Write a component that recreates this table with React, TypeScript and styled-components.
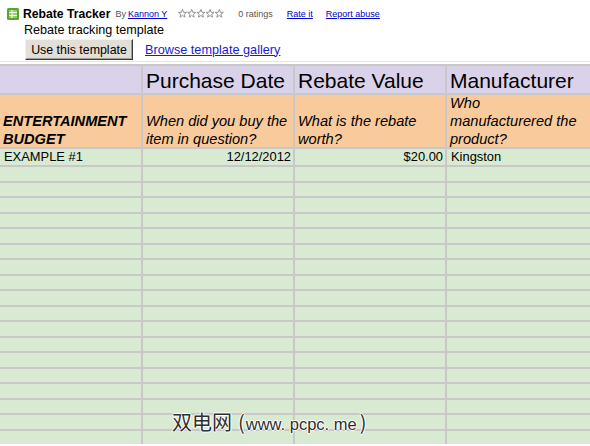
import React from "react";
import styled, { createGlobalStyle } from "styled-components";

const GlobalStyle = createGlobalStyle`
  html, body { margin: 0; padding: 0; background: #fff; overflow: hidden; }
  body { font-family: "Liberation Sans", Arial, sans-serif; color: #000; }
`;

const Page = styled.div`
  position: relative;
  width: 590px;
  height: 446px;
  overflow: hidden;
  background: #fff;
`;

const TopBar = styled.div`
  display: flex;
  flex-direction: column;
  padding: 6px 0 1px 7px;
  border-bottom: 1px solid #e6e6e6;
  margin-bottom: 1px;
`;

const TitleRow = styled.div`
  display: flex;
  align-items: center;
  height: 15px;
`;

const Title = styled.span`
  font-size: 12.2px;
  font-weight: bold;
  margin-left: 4px;
  white-space: nowrap;
`;

const Small = styled.span<{ $ml?: number }>`
  font-size: 9px;
  color: #555;
  margin-left: ${(p) => p.$ml ?? 0}px;
  white-space: nowrap;
`;

const SmallLink = styled.a<{ $ml?: number }>`
  font-size: 9px;
  color: #0000cc;
  text-decoration: underline;
  margin-left: ${(p) => p.$ml ?? 0}px;
  white-space: nowrap;
`;

const StarBox = styled.svg<{ $ml?: number }>`
  margin-left: ${(p) => p.$ml ?? 0}px;
  display: block;
`;

const Subtitle = styled.div`
  font-size: 12.6px;
  line-height: 15px;
  margin: 2px 0 0 17px;
  white-space: nowrap;
`;

const ActionRow = styled.div`
  display: flex;
  align-items: center;
  margin: 1px 0 0 18px;
  gap: 12px;
`;

const UseButton = styled.button`
  height: 21px;
  width: 108px;
  padding: 0;
  font-family: "Liberation Sans", Arial, sans-serif;
  font-size: 12.4px;
  color: #000;
  background: #e2dfd7;
  border: 1px solid;
  border-color: #f4f2ee #3c3c3c #3c3c3c #f4f2ee;
  box-shadow: inset -1px -1px 0 #a09d96;
  white-space: nowrap;
`;

const GalleryLink = styled.a`
  font-size: 12.7px;
  color: #1a1ad0;
  text-decoration: underline;
  white-space: nowrap;
`;

const Sheet = styled.div`
  display: grid;
  grid-template-columns: 141px 150px 150px 1fr;
  grid-template-rows: 27px 52px 16px repeat(18, 13.5px);
  gap: 2px;
  padding-top: 2px;
  margin-top: 2px;
  background: #c8c8c8;
`;

type Tone = "head" | "desc" | "data";
const toneBg: Record<Tone, string> = {
  head: "#d9d2e9",
  desc: "#f9cb9c",
  data: "#d9ead3",
};

const Cell = styled.div<{ $tone: Tone; $right?: boolean }>`
  background: ${(p) => toneBg[p.$tone]};
  display: flex;
  flex-direction: column;
  justify-content: flex-end;
  align-items: ${(p) => (p.$right ? "flex-end" : "flex-start")};
  padding: 0 2px 0 3px;
  overflow: hidden;
  white-space: nowrap;
`;

const HeadText = styled.span`
  font-size: 21px;
  line-height: 24px;
  padding-bottom: 0px;
`;

const DescText = styled.span<{ $bold?: boolean }>`
  font-size: 14.6px;
  line-height: 18px;
  font-style: italic;
  font-weight: ${(p) => (p.$bold ? "bold" : "normal")};
  white-space: pre-line;
  margin-bottom: -1px;
`;

const DataText = styled.span`
  font-size: 12.9px;
  line-height: 16px;
  padding-left: 1px;
`;

const Watermark = styled.div`
  position: absolute;
  left: 172px;
  top: 410px;
  display: flex;
  align-items: baseline;
  color: #2e2e2e;
  white-space: nowrap;
  text-shadow: 1px 0 0 #fff, -1px 0 0 #fff, 0 1px 0 #fff, 0 -1px 0 #fff;
`;

const MarkCjk = styled.span<{ $ml?: number }>`
  font-family: "Noto Sans CJK SC", sans-serif;
  font-size: 20px;
  line-height: 24px;
  margin-left: ${(p) => p.$ml ?? 0}px;
`;

const MarkLatin = styled.span`
  font-family: "Liberation Sans", Arial, sans-serif;
  font-size: 16.5px;
  line-height: 24px;
  margin-left: 1px;
`;

const DocIcon = () => (
  <svg width="12" height="12" viewBox="0 0 12 12" style={{ display: "block" }}>
    <rect x="0" y="0" width="12" height="12" rx="1.5" fill="#5aa532" />
    <rect x="2" y="2" width="8" height="8" fill="#8fd05e" />
    <rect x="2" y="4" width="8" height="1" fill="#fff" />
    <rect x="2" y="7" width="8" height="1" fill="#fff" />
    <rect x="4.5" y="2" width="1" height="8" fill="#fff" />
  </svg>
);

const starPoints = (cx: number) => {
  const pts: string[] = [];
  for (let i = 0; i < 10; i++) {
    const r = i % 2 === 0 ? 4.3 : 1.8;
    const a = (Math.PI / 5) * i - Math.PI / 2;
    pts.push(`${(cx + r * Math.cos(a)).toFixed(2)},${(4.7 + r * Math.sin(a)).toFixed(2)}`);
  }
  return pts.join(" ");
};

const Stars = () => (
  <StarBox $ml={11} width="46" height="9" viewBox="0 0 46 9">
    {[0, 1, 2, 3, 4].map((i) => (
      <polygon
        key={i}
        points={starPoints(4.5 + i * 9.2)}
        fill="#fff"
        stroke="#8a8a8a"
        strokeWidth="0.9"
      />
    ))}
  </StarBox>
);

const emptyRows = Array.from({ length: 18 }, (_, i) => i);

export default function App() {
  return (
    <Page>
      <GlobalStyle />
      <TopBar>
        <TitleRow>
          <DocIcon />
          <Title>Rebate Tracker</Title>
          <Small $ml={5}>By</Small>
          <SmallLink $ml={2}>Kannon Y</SmallLink>
          <Stars />
          <Small $ml={14}>0 ratings</Small>
          <SmallLink $ml={14}>Rate it</SmallLink>
          <SmallLink $ml={13}>Report abuse</SmallLink>
        </TitleRow>
        <Subtitle>Rebate tracking template</Subtitle>
        <ActionRow>
          <UseButton>Use this template</UseButton>
          <GalleryLink>Browse template gallery</GalleryLink>
        </ActionRow>
      </TopBar>
      <Sheet>
        <Cell $tone="head" />
        <Cell $tone="head"><HeadText>Purchase Date</HeadText></Cell>
        <Cell $tone="head"><HeadText>Rebate Value</HeadText></Cell>
        <Cell $tone="head"><HeadText>Manufacturer</HeadText></Cell>

        <Cell $tone="desc"><DescText $bold>{"ENTERTAINMENT\nBUDGET"}</DescText></Cell>
        <Cell $tone="desc"><DescText>{"When did you buy the\nitem in question?"}</DescText></Cell>
        <Cell $tone="desc"><DescText>{"What is the rebate\nworth?"}</DescText></Cell>
        <Cell $tone="desc"><DescText>{"Who\nmanufacturered the\nproduct?"}</DescText></Cell>

        <Cell $tone="data"><DataText>EXAMPLE #1</DataText></Cell>
        <Cell $tone="data" $right><DataText>12/12/2012</DataText></Cell>
        <Cell $tone="data" $right><DataText>$20.00</DataText></Cell>
        <Cell $tone="data"><DataText>Kingston</DataText></Cell>

        {emptyRows.map((r) => (
          <React.Fragment key={r}>
            <Cell $tone="data" />
            <Cell $tone="data" />
            <Cell $tone="data" />
            <Cell $tone="data" />
          </React.Fragment>
        ))}
      </Sheet>
      <Watermark>
        <MarkCjk>双电网</MarkCjk>
        <MarkCjk $ml={6}>(</MarkCjk>
        <MarkLatin>www. pcpc. me</MarkLatin>
        <MarkCjk $ml={3}>)</MarkCjk>
      </Watermark>
    </Page>
  );
}
